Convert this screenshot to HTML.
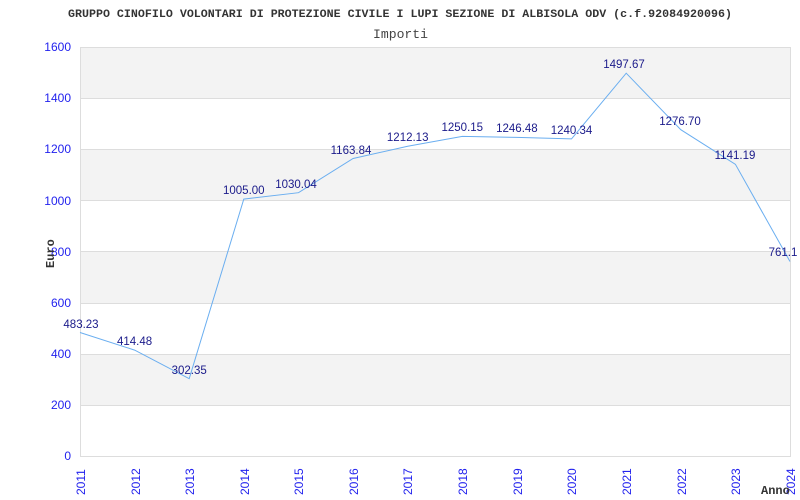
<!DOCTYPE html>
<html><head><meta charset="utf-8"><style>body{margin:0;background:#fff}svg{display:block}</style></head><body>
<svg width="800" height="500" xmlns="http://www.w3.org/2000/svg" font-family="Liberation Sans, sans-serif">
<rect width="800" height="500" fill="#fff"/>
<text x="68" y="17" font-family="Liberation Mono, monospace" font-weight="bold" font-size="11" fill="#333" textLength="664" lengthAdjust="spacingAndGlyphs">GRUPPO CINOFILO VOLONTARI DI PROTEZIONE CIVILE I LUPI SEZIONE DI ALBISOLA ODV (c.f.92084920096)</text>
<text x="373" y="38" font-family="Liberation Mono, monospace" font-size="13" fill="#444" textLength="55" lengthAdjust="spacingAndGlyphs">Importi</text>
<g fill="#f3f3f3">
<rect x="80" y="47" width="710" height="51"/>
<rect x="80" y="149" width="710" height="51"/>
<rect x="80" y="251" width="710" height="52"/>
<rect x="80" y="354" width="710" height="51"/>
</g>
<g stroke="#ddd" stroke-width="1">
<line x1="80" y1="47.5" x2="790" y2="47.5"/>
<line x1="80" y1="98.5" x2="790" y2="98.5"/>
<line x1="80" y1="149.5" x2="790" y2="149.5"/>
<line x1="80" y1="200.5" x2="790" y2="200.5"/>
<line x1="80" y1="251.5" x2="790" y2="251.5"/>
<line x1="80" y1="303.5" x2="790" y2="303.5"/>
<line x1="80" y1="354.5" x2="790" y2="354.5"/>
<line x1="80" y1="405.5" x2="790" y2="405.5"/>
<line x1="80" y1="456.5" x2="790" y2="456.5"/>
<line x1="80.5" y1="47" x2="80.5" y2="457"/>
<line x1="790.5" y1="47" x2="790.5" y2="457"/>
</g>
<g fill="#2222ee" font-size="12" text-anchor="end">
<text x="71" y="51">1600</text>
<text x="71" y="102">1400</text>
<text x="71" y="153">1200</text>
<text x="71" y="205">1000</text>
<text x="71" y="256">800</text>
<text x="71" y="307">600</text>
<text x="71" y="358">400</text>
<text x="71" y="409">200</text>
<text x="71" y="460">0</text>
</g>
<g fill="#2222ee" font-size="12">
<text transform="translate(85,495) rotate(-90)">2011</text>
<text transform="translate(140,495) rotate(-90)">2012</text>
<text transform="translate(194,495) rotate(-90)">2013</text>
<text transform="translate(249,495) rotate(-90)">2014</text>
<text transform="translate(303,495) rotate(-90)">2015</text>
<text transform="translate(358,495) rotate(-90)">2016</text>
<text transform="translate(412,495) rotate(-90)">2017</text>
<text transform="translate(467,495) rotate(-90)">2018</text>
<text transform="translate(522,495) rotate(-90)">2019</text>
<text transform="translate(576,495) rotate(-90)">2020</text>
<text transform="translate(631,495) rotate(-90)">2021</text>
<text transform="translate(686,495) rotate(-90)">2022</text>
<text transform="translate(740,495) rotate(-90)">2023</text>
<text transform="translate(795,495) rotate(-90)">2024</text>
</g>
<text transform="translate(54,268) rotate(-90)" font-family="Liberation Mono, monospace" font-weight="bold" font-size="12" fill="#333">Euro</text>
<text x="761" y="494" font-family="Liberation Mono, monospace" font-weight="bold" font-size="12" fill="#333">Anno</text>
<polyline fill="none" stroke="#6aaef0" stroke-width="1" points="80,332.5 134.6,350.1 189.2,378.7 243.8,199.1 298.5,192.7 353.1,158.5 407.7,146.2 462.3,136.4 516.9,137.4 571.5,138.9 626.2,73.2 680.8,129.7 735.4,164.3 790,261.5"/>
<g fill="#1a1a8a" font-size="11.5" text-anchor="middle">
<text x="81" y="328">483.23</text>
<text x="134.6" y="345">414.48</text>
<text x="189.2" y="374">302.35</text>
<text x="243.8" y="194">1005.00</text>
<text x="296" y="188">1030.04</text>
<text x="351" y="154">1163.84</text>
<text x="407.7" y="141">1212.13</text>
<text x="462.3" y="131">1250.15</text>
<text x="516.9" y="132">1246.48</text>
<text x="571.5" y="134">1240.34</text>
<text x="624" y="68">1497.67</text>
<text x="680" y="125">1276.70</text>
<text x="735" y="159">1141.19</text>
<text x="783" y="256">761.1</text>
</g>
</svg>
</body></html>
